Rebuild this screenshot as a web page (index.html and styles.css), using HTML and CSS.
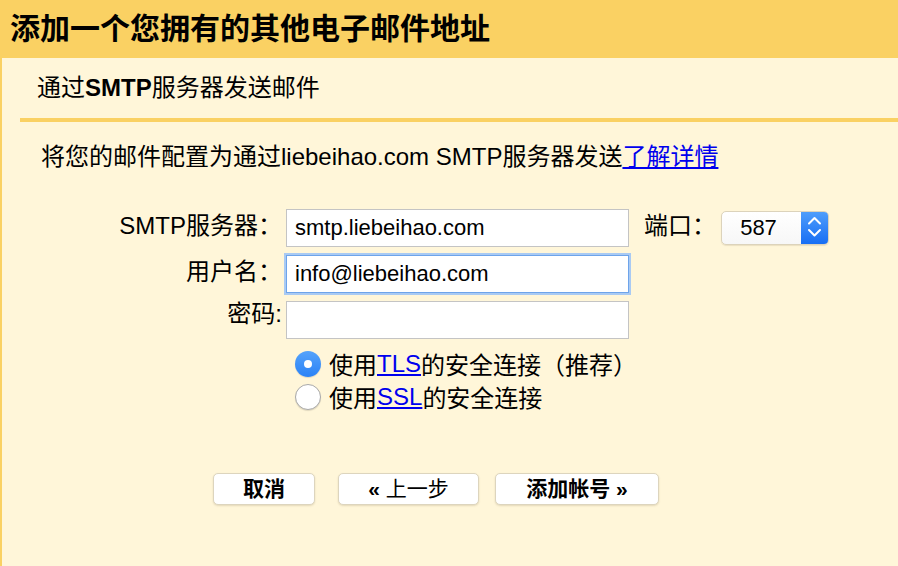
FILE: index.html
```html
<!DOCTYPE html>
<html lang="zh-CN">
<head>
<meta charset="utf-8">
<title>添加一个您拥有的其他电子邮件地址</title>
<link rel="stylesheet" href="styles.css">
</head>
<body>
<div class="page">
  <div class="titlebar">添加一个您拥有的其他电子邮件地址</div>
  <div class="panel">
    <div class="section-title">通过<b>SMTP</b>服务器发送邮件</div>
    <div class="divider"></div>
    <p class="desc">将您的邮件配置为通过liebeihao.com SMTP服务器发送<a href="#">了解详情</a></p>
    <form class="form">
      <label class="lbl">SMTP服务器：</label>
      <input class="field" type="text" value="smtp.liebeihao.com">
      <div class="port">
        <span class="port-lbl">端口：</span>
        <div class="select">
          <span class="select-val">587</span>
          <span class="select-arrow">
            <svg width="27" height="34" viewBox="0 0 27 34"><polyline points="8,12.5 13.5,7 19,12.5" fill="none" stroke="#fff" stroke-width="2" stroke-linecap="round" stroke-linejoin="round"/><polyline points="8,19 13.5,24.5 19,19" fill="none" stroke="#fff" stroke-width="2" stroke-linecap="round" stroke-linejoin="round"/></svg>
          </span>
        </div>
      </div>
      <label class="lbl">用户名：</label>
      <input class="field focus" type="text" value="info@liebeihao.com">
      <div></div>
      <label class="lbl lbl-pw">密码:</label>
      <input class="field" type="password" value="">
      <div></div>
      <div class="radios">
        <label class="radio-row"><span class="radio checked"></span>使用<a href="#">TLS</a>的安全连接（推荐）</label>
        <label class="radio-row"><span class="radio"></span>使用<a href="#">SSL</a>的安全连接</label>
      </div>
    </form>
    <div class="buttons">
      <button class="btn btn-cancel" type="button">取消</button>
      <button class="btn btn-back" type="button"><b>«</b> 上一步</button>
      <button class="btn btn-add" type="button">添加帐号 <b>»</b></button>
    </div>
  </div>
</div>
</body>
</html>
```

FILE: styles.css
```css
html, body {
  margin: 0;
  padding: 0;
  height: 100%;
  overflow: hidden;
}
body {
  background: #fad163;
  font-family: "Liberation Sans", "Noto Sans CJK SC", sans-serif;
  color: #000;
}
.page {
  display: flex;
  flex-direction: column;
  height: 100vh;
}
.titlebar {
  height: 58px;
  line-height: 58px;
  padding-left: 10px;
  font-size: 30px;
  font-weight: bold;
  flex: none;
}
.panel {
  flex: 1;
  margin-left: 2px;
  background: #fff6d9;
}
.section-title {
  height: 60px;
  line-height: 60px;
  padding-left: 35px;
  font-size: 24px;
}
.section-title b {
  font-weight: bold;
}
.divider {
  height: 4px;
  margin-left: 18px;
  background: #fad163;
}
.desc {
  margin: 20px 0 0 0;
  padding-left: 39px;
  line-height: 30px;
  font-size: 24px;
}
a {
  color: #0000ee;
  text-decoration: underline;
}
.form {
  margin-top: 37px;
  display: grid;
  grid-template-columns: 280px 343px auto;
  grid-template-rows: 38px 38px 38px auto;
  column-gap: 4px;
  row-gap: 8px;
  align-items: start;
}
.lbl {
  text-align: right;
  font-size: 24px;
  line-height: 34px;
}
.lbl-pw {
  line-height: 26px;
}
.field {
  box-sizing: border-box;
  width: 343px;
  height: 38px;
  margin: 0;
  padding: 0 8px;
  border: 1px solid #c4c4c4;
  background: #fff;
  font-family: "Liberation Sans", "Noto Sans CJK SC", sans-serif;
  font-size: 22px;
  color: #000;
  outline: none;
}
.field.focus {
  border: 1px solid #6ea4ea;
  box-shadow: 0 0 0 2px #a9caf3;
}
.port {
  display: flex;
  align-items: center;
  height: 38px;
  margin-left: 11px;
}
.port-lbl {
  font-size: 24px;
  line-height: 34px;
  margin-top: -4px;
  width: 72px;
  margin-right: 5px;
}
.select {
  display: flex;
  box-sizing: border-box;
  width: 108px;
  height: 34px;
  border: 1px solid #dcd3bb;
  border-radius: 5px;
  overflow: hidden;
  background: linear-gradient(#ffffff, #f7f7f7);
  box-shadow: 0 1px 1px rgba(120, 100, 60, 0.15);
}
.select-val {
  flex: 1;
  text-align: center;
  line-height: 32px;
  font-size: 22px;
  padding-right: 6px;
}
.select-arrow {
  width: 27px;
  display: flex;
  align-items: center;
  justify-content: center;
  background: linear-gradient(#4e9dfb, #176ef4);
}
.select-arrow svg {
  display: block;
}
.radios {
  grid-column: 2 / 4;
  margin-top: 0;
  padding-left: 9px;
}
.radio-row {
  display: flex;
  align-items: center;
  height: 33px;
  font-size: 24px;
}
.radio {
  box-sizing: border-box;
  width: 26px;
  height: 26px;
  border-radius: 50%;
  margin-right: 8px;
  background: #fff;
  border: 1px solid #a9a9a9;
  box-shadow: 0 1px 1px rgba(0, 0, 0, 0.12);
  display: flex;
  align-items: center;
  justify-content: center;
}
.radio.checked {
  border: none;
  background: linear-gradient(#55a3fb, #2a82f6);
}
.radio.checked::after {
  content: "";
  width: 8px;
  height: 8px;
  border-radius: 50%;
  background: #fff;
}
.buttons {
  display: flex;
  margin-top: 60px;
  padding-left: 211px;
}
.btn {
  box-sizing: border-box;
  height: 32px;
  padding: 0;
  border: 1px solid #ddd5be;
  border-radius: 5px;
  background: #fff;
  box-shadow: 0 1px 2px rgba(120, 100, 60, 0.2);
  font-family: "Liberation Sans", "Noto Sans CJK SC", sans-serif;
  font-size: 21px;
  line-height: 30px;
  color: #000;
}
.btn-cancel {
  width: 102px;
  margin-right: 23px;
  font-weight: bold;
}
.btn-back {
  width: 141px;
  margin-right: 16px;
  font-weight: normal;
}
.btn-add {
  width: 164px;
  font-weight: bold;
}
```
